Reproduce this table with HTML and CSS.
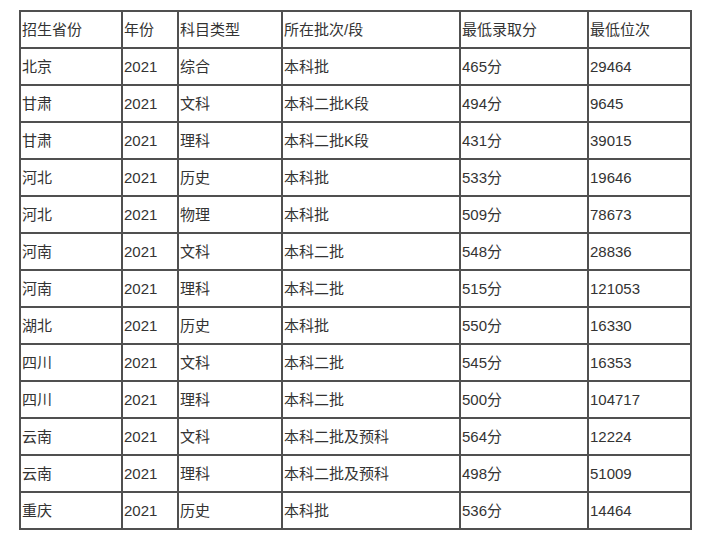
FILE: index.html
```html
<!DOCTYPE html>
<html lang="zh">
<head>
<meta charset="utf-8">
<link rel="stylesheet" href="styles.css">
</head>
<body>
<table class="score-table">
<colgroup>
<col class="c1"><col class="c2"><col class="c3"><col class="c4"><col class="c5"><col class="c6">
</colgroup>
<tbody>
<tr><td>招生省份</td><td>年份</td><td>科目类型</td><td>所在批次/段</td><td>最低录取分</td><td>最低位次</td></tr>
<tr><td>北京</td><td>2021</td><td>综合</td><td>本科批</td><td>465分</td><td>29464</td></tr>
<tr><td>甘肃</td><td>2021</td><td>文科</td><td>本科二批K段</td><td>494分</td><td>9645</td></tr>
<tr><td>甘肃</td><td>2021</td><td>理科</td><td>本科二批K段</td><td>431分</td><td>39015</td></tr>
<tr><td>河北</td><td>2021</td><td>历史</td><td>本科批</td><td>533分</td><td>19646</td></tr>
<tr><td>河北</td><td>2021</td><td>物理</td><td>本科批</td><td>509分</td><td>78673</td></tr>
<tr><td>河南</td><td>2021</td><td>文科</td><td>本科二批</td><td>548分</td><td>28836</td></tr>
<tr><td>河南</td><td>2021</td><td>理科</td><td>本科二批</td><td>515分</td><td>121053</td></tr>
<tr><td>湖北</td><td>2021</td><td>历史</td><td>本科批</td><td>550分</td><td>16330</td></tr>
<tr><td>四川</td><td>2021</td><td>文科</td><td>本科二批</td><td>545分</td><td>16353</td></tr>
<tr><td>四川</td><td>2021</td><td>理科</td><td>本科二批</td><td>500分</td><td>104717</td></tr>
<tr><td>云南</td><td>2021</td><td>文科</td><td>本科二批及预科</td><td>564分</td><td>12224</td></tr>
<tr><td>云南</td><td>2021</td><td>理科</td><td>本科二批及预科</td><td>498分</td><td>51009</td></tr>
<tr><td>重庆</td><td>2021</td><td>历史</td><td>本科批</td><td>536分</td><td>14464</td></tr>
</tbody>
</table>
</body>
</html>
```
FILE: styles.css
```css
html, body {
  margin: 0;
  padding: 0;
  background: #ffffff;
}
body {
  padding: 10px 0 0 19px;
  font-family: "Liberation Sans", Arial, "Noto Sans CJK SC", sans-serif;
  font-size: 15px;
  color: #333333;
}
.score-table {
  border-collapse: separate;
  border-spacing: 0;
  border: 1px solid #505050;
  table-layout: fixed;
  width: 673px;
}
.c1 { width: 102px; }
.c2 { width: 56px; }
.c3 { width: 104px; }
.c4 { width: 178px; }
.c5 { width: 128px; }
.c6 { width: 103px; }
.score-table td {
  border: 1px solid #505050;
  height: 35px;
  padding: 0 0 0 1px;
  box-sizing: border-box;
  height: 37px;
  vertical-align: middle;
  white-space: nowrap;
  line-height: 20px;
}
```
